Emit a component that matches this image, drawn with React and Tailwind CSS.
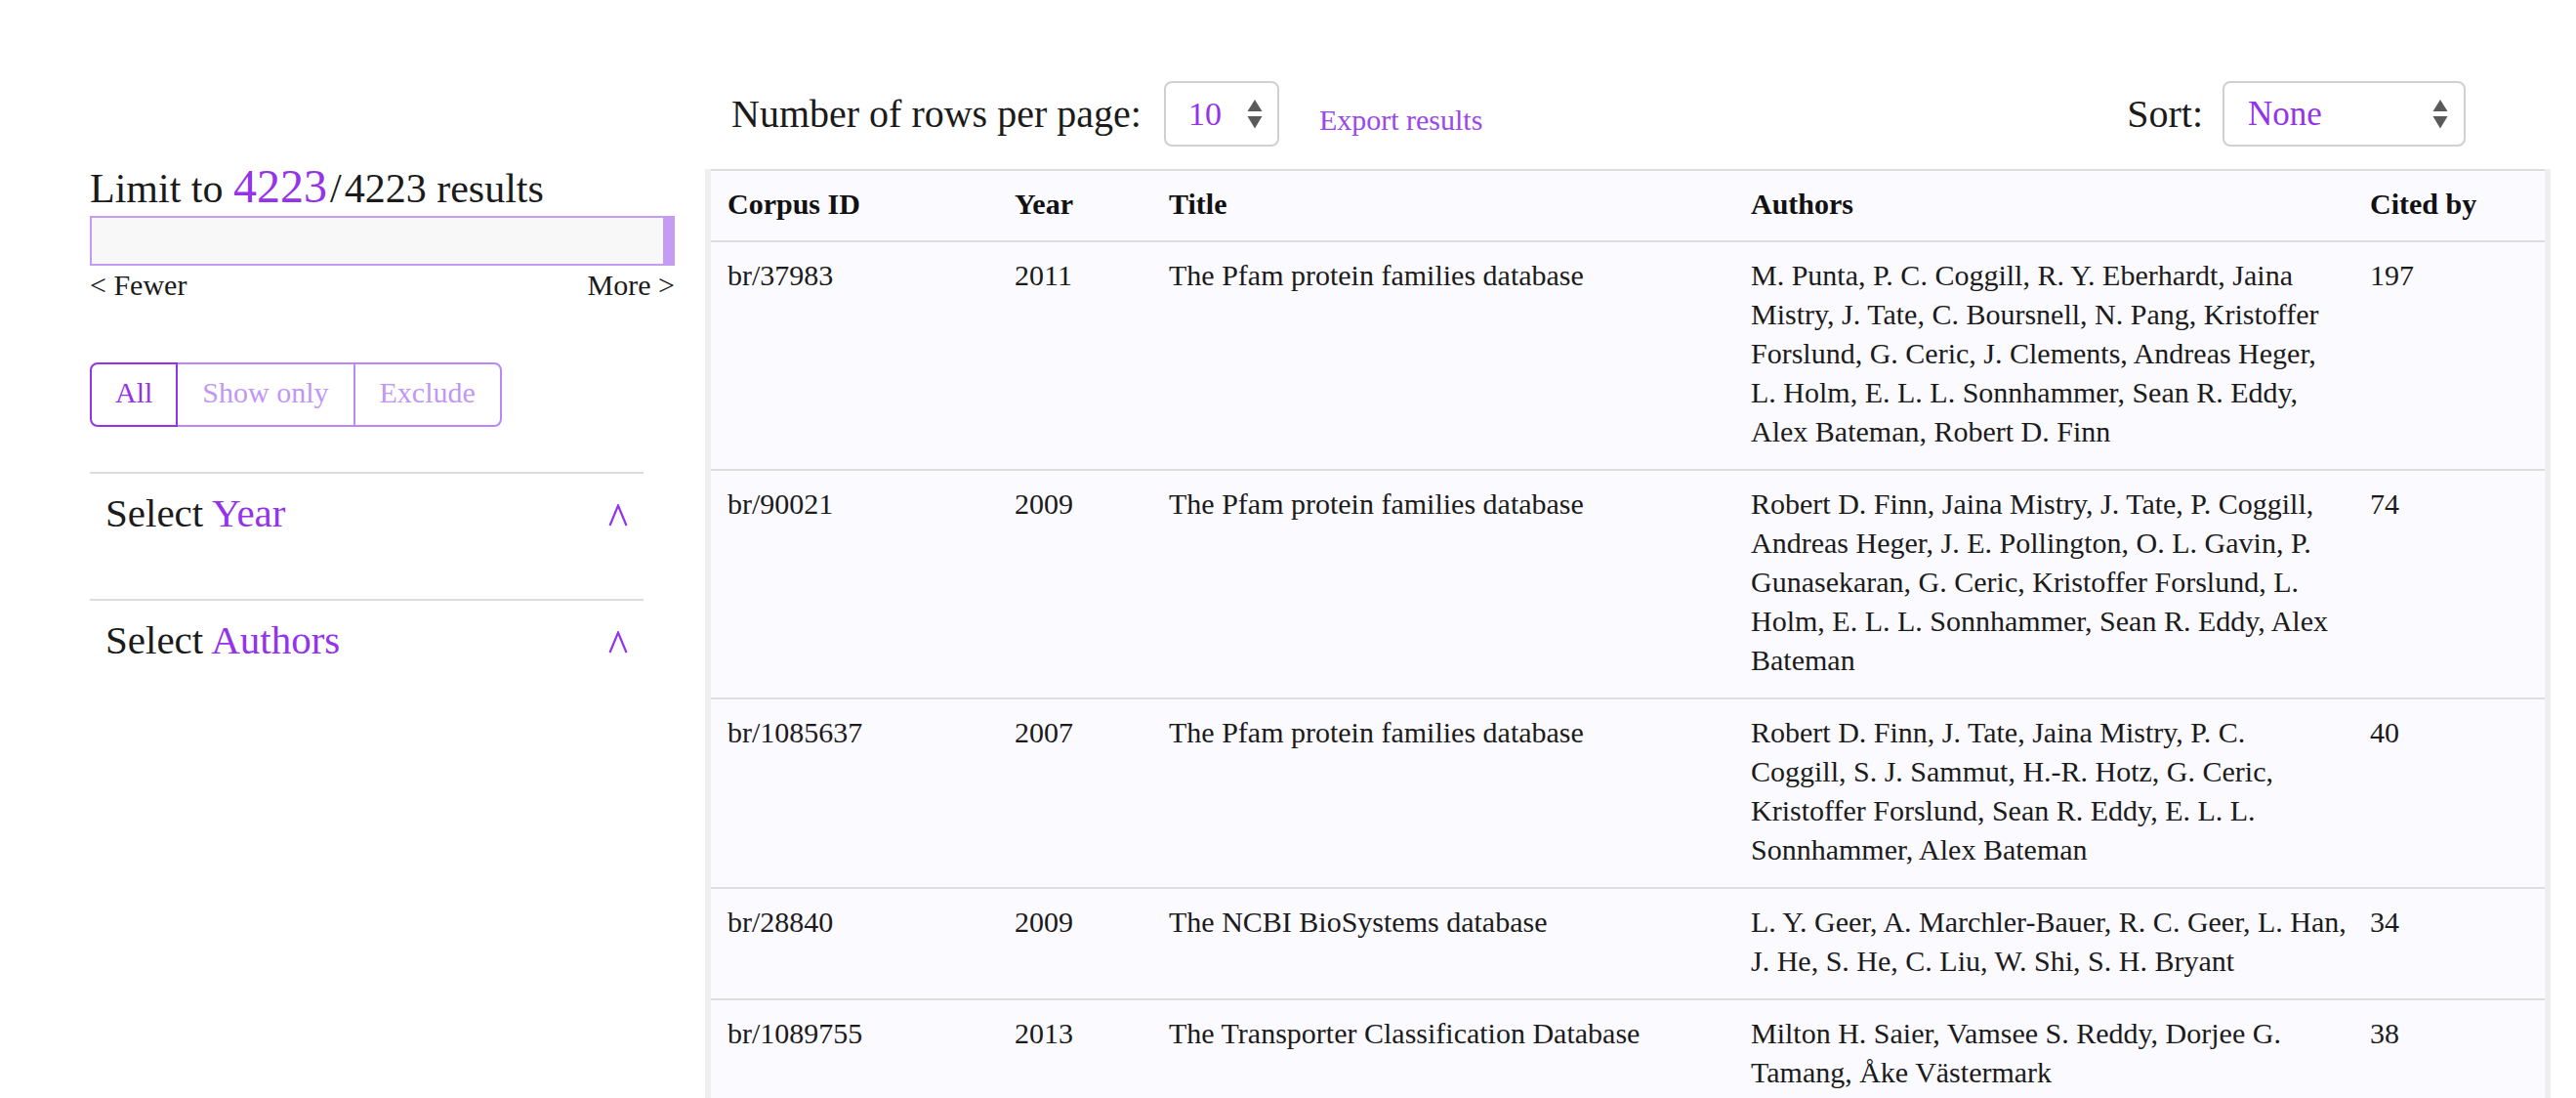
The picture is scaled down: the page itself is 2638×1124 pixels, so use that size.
import React from "react";

const ROWS = [
  {
    id: "br/37983",
    year: "2011",
    title: "The Pfam protein families database",
    authors: [
      "M. Punta, P. C. Coggill, R. Y. Eberhardt, Jaina",
      "Mistry, J. Tate, C. Boursnell, N. Pang, Kristoffer",
      "Forslund, G. Ceric, J. Clements, Andreas Heger,",
      "L. Holm, E. L. L. Sonnhammer, Sean R. Eddy,",
      "Alex Bateman, Robert D. Finn",
    ],
    cited: "197",
  },
  {
    id: "br/90021",
    year: "2009",
    title: "The Pfam protein families database",
    authors: [
      "Robert D. Finn, Jaina Mistry, J. Tate, P. Coggill,",
      "Andreas Heger, J. E. Pollington, O. L. Gavin, P.",
      "Gunasekaran, G. Ceric, Kristoffer Forslund, L.",
      "Holm, E. L. L. Sonnhammer, Sean R. Eddy, Alex",
      "Bateman",
    ],
    cited: "74",
  },
  {
    id: "br/1085637",
    year: "2007",
    title: "The Pfam protein families database",
    authors: [
      "Robert D. Finn, J. Tate, Jaina Mistry, P. C.",
      "Coggill, S. J. Sammut, H.-R. Hotz, G. Ceric,",
      "Kristoffer Forslund, Sean R. Eddy, E. L. L.",
      "Sonnhammer, Alex Bateman",
    ],
    cited: "40",
  },
  {
    id: "br/28840",
    year: "2009",
    title: "The NCBI BioSystems database",
    authors: [
      "L. Y. Geer, A. Marchler-Bauer, R. C. Geer, L. Han,",
      "J. He, S. He, C. Liu, W. Shi, S. H. Bryant",
    ],
    cited: "34",
  },
  {
    id: "br/1089755",
    year: "2013",
    title: "The Transporter Classification Database",
    authors: [
      "Milton H. Saier, Vamsee S. Reddy, Dorjee G.",
      "Tamang, Åke Västermark",
    ],
    cited: "38",
  },
];

function Stepper() {
  return (
    <svg width="16" height="30" viewBox="0 0 16 30" className="shrink-0">
      <path d="M8 0 L15.5 12 L0.5 12 Z" fill="#5a5a5a" />
      <path d="M0.5 17 L15.5 17 L8 29.5 Z" fill="#5a5a5a" />
    </svg>
  );
}

function Chevron() {
  return (
    <svg width="20" height="23" viewBox="0 0 20 23" className="shrink-0 mb-[10px]">
      <polyline
        points="1.5,22 10,1.5 18.5,22"
        fill="none"
        stroke="#9333ea"
        strokeWidth="2.2"
      />
    </svg>
  );
}

function Accordion({ label }) {
  return (
    <div className="border-t-2 border-[#dddddd] pt-[16px] pb-[64px] px-[16px] flex items-end justify-between">
      <div className="text-[41px] leading-[48px] text-[#1b1b1b]">
        Select <span className="text-[#9333ea]">{label}</span>
      </div>
      <Chevron />
    </div>
  );
}

export default function App() {
  return (
    <div
      className="min-h-screen bg-white flex items-start text-[#1b1b1b]"
      style={{ fontFamily: '"Liberation Serif", "Times New Roman", serif' }}
    >
      {/* Left panel */}
      <div className="ml-[92px] w-[599px] pt-[167px] shrink-0">
        <div className="text-[42px] leading-[48px] whitespace-nowrap">
          Limit to <span className="text-[48px] text-[#9333ea]">4223</span>
          <span className="mx-[3px]">/</span>4223 results
        </div>
        <div className="mt-[4px] h-[51px] border-2 border-[#c49cf4] bg-[#f8f8f8] flex justify-end">
          <div className="w-[10px] h-full bg-[#c49cf4]" />
        </div>
        <div className="flex justify-between text-[30px] leading-[40px]">
          <span>&lt; Fewer</span>
          <span>More &gt;</span>
        </div>

        <div className="mt-[59px] flex h-[66px] text-[30px] leading-[40px]">
          <div className="flex items-center px-[24px] pb-[4px] border-2 border-[#9333ea] rounded-l-[8px] text-[#9333ea]">
            All
          </div>
          <div className="flex items-center px-[25px] pb-[4px] border-y-2 border-[#b987f7] text-[#c197f5]">
            Show only
          </div>
          <div className="flex items-center px-[25px] pb-[4px] border-2 border-[#b987f7] rounded-r-[8px] text-[#c197f5]">
            Exclude
          </div>
        </div>

        <div className="mt-[46px] w-[567px]">
          <Accordion label="Year" />
          <Accordion label="Authors" />
        </div>
      </div>

      {/* Right panel */}
      <div className="ml-[31px] w-[1890px] shrink-0 pt-[83px]">
        <div className="flex items-center h-[67px] pl-[27px] pr-[87px]">
          <span className="text-[40px] leading-[48px] whitespace-nowrap">
            Number of rows per page:
          </span>
          <div className="ml-[23px] w-[118px] h-[67px] border-2 border-[#d0d0d0] rounded-[8px] flex items-center justify-between pl-[23px] pr-[15px]">
            <span className="text-[34px] leading-[40px] text-[#9333ea]">10</span>
            <Stepper />
          </div>
          <span className="ml-[41px] pt-[13px] text-[30px] leading-[40px] text-[#9a48ee] whitespace-nowrap">
            Export results
          </span>
          <div className="flex-1" />
          <span className="text-[40px] leading-[48px]">Sort:</span>
          <div className="ml-[20px] w-[249px] h-[67px] border-2 border-[#d0d0d0] rounded-[8px] flex items-center justify-between pl-[24px] pr-[16px]">
            <span className="text-[35px] leading-[40px] text-[#9333ea]">None</span>
            <Stepper />
          </div>
        </div>

        <div className="mt-[23px] border-x-[6px] border-[#efefef] bg-[#fbfaff]">
          <table className="w-full table-fixed border-collapse text-[30px] leading-[40px]">
            <thead>
              <tr className="border-t-2 border-b-2 border-[#dddddd]">
                <th className="w-[294px] text-left font-bold pl-[17px] pt-[14px] pb-[17px] text-[#111]">Corpus ID</th>
                <th className="w-[158px] text-left font-bold pl-[17px] pt-[14px] pb-[17px] text-[#111]">Year</th>
                <th className="w-[596px] text-left font-bold pl-[17px] pt-[14px] pb-[17px] text-[#111]">Title</th>
                <th className="w-[634px] text-left font-bold pl-[17px] pt-[14px] pb-[17px] text-[#111]">Authors</th>
                <th className="w-[196px] text-left font-bold pl-[17px] pt-[14px] pb-[17px] text-[#111]">Cited by</th>
              </tr>
            </thead>
            <tbody>
              {ROWS.map((r) => (
                <tr key={r.id} className="border-b-2 border-[#dddddd]">
                  <td className="align-top pl-[17px] pt-[14px] pb-[18px]">{r.id}</td>
                  <td className="align-top pl-[17px] pt-[14px] pb-[18px]">{r.year}</td>
                  <td className="align-top pl-[17px] pt-[14px] pb-[18px] whitespace-nowrap">{r.title}</td>
                  <td className="align-top pl-[17px] pt-[14px] pb-[18px]">
                    {r.authors.map((line, i) => (
                      <span key={i} className="block whitespace-nowrap">
                        {line}
                      </span>
                    ))}
                  </td>
                  <td className="align-top pl-[17px] pt-[14px] pb-[18px]">{r.cited}</td>
                </tr>
              ))}
            </tbody>
          </table>
        </div>
      </div>
    </div>
  );
}
